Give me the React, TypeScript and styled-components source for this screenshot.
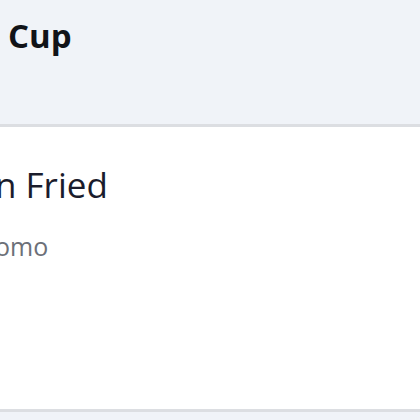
import styled, { createGlobalStyle } from "styled-components";

const GlobalStyle = createGlobalStyle`
	html, body {
		margin: 0;
		padding: 0;
		background: #ffffff;
		overflow: hidden;
	}
	body {
		font-family: "Open Sans", "Noto Sans", "Liberation Sans", sans-serif;
	}
`;

const Table = styled.div`
	width: 420px;
	height: 420px;
	display: flex;
	flex-direction: column;
	overflow: hidden;
`;

const HeadRow = styled.div`
	height: 127px;
	box-sizing: border-box;
	padding: 16px 0 0 8px;
	background: #f0f3f8;
	border-bottom: 3px solid #dcdee2;
`;

const HeadCell = styled.div`
	font-size: 33px;
	font-weight: 700;
	line-height: 1.2;
	color: #111318;
`;

const BodyRow = styled.div`
	height: 285px;
	box-sizing: border-box;
	padding: 37px 0 0 0;
	background: #ffffff;
	border-bottom: 3px solid #dcdee2;
	display: flex;
	flex-direction: column;
	gap: 25px;
`;

const Title = styled.div<{ $shift: number }>`
	margin-left: ${(p) => p.$shift}px;
	font-size: 35px;
	font-weight: 500;
	line-height: 1.2;
	color: #1a1c2c;
	white-space: nowrap;
`;

const Sub = styled.div<{ $shift: number }>`
	margin-left: ${(p) => p.$shift}px;
	font-size: 25px;
	line-height: 1.2;
	color: #6c7078;
	white-space: nowrap;
`;

const Foot = styled.div`
	flex: 1;
	background: #f0f3f8;
`;

export default function App() {
	return (
		<>
			<GlobalStyle />
			<Table>
				<HeadRow>
					<HeadCell>Cup</HeadCell>
				</HeadRow>
				<BodyRow>
					<Title $shift={-5}>n Fried</Title>
					<Sub $shift={-5}>omo</Sub>
				</BodyRow>
				<Foot />
			</Table>
		</>
	);
}
